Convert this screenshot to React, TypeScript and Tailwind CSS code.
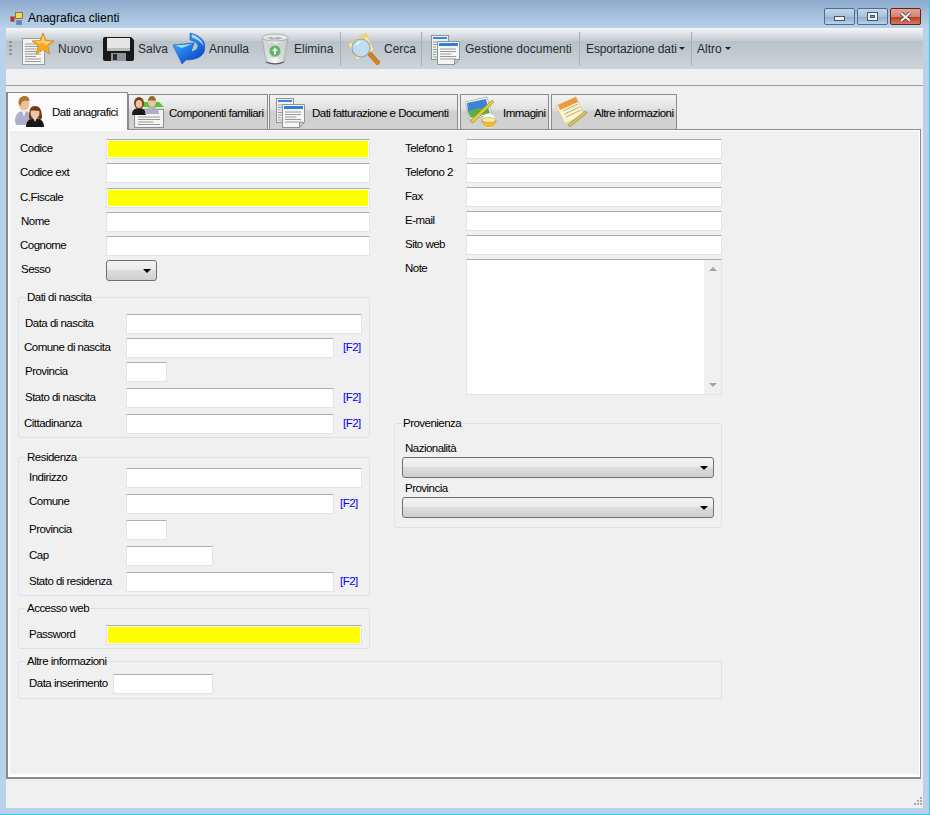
import React from 'react';

const FONT = "font-['Liberation_Sans',Arial,sans-serif]";

function DocLines({ x, y, w, n }: { x: number; y: number; w: number; n: number }) {
    return (
        <g stroke="#9a9a9a" strokeWidth="1">
            {Array.from({ length: n }).map((_, i) => (
                <line key={i} x1={x} x2={x + (i % 3 === 2 ? w * 0.7 : w)} y1={y + i * 2.5} y2={y + i * 2.5} />
            ))}
        </g>
    );
}

function NuovoIcon() {
    return (
        <svg width="32" height="32" viewBox="0 0 32 32" className="shrink-0">
            <rect x="0.5" y="5.5" width="22" height="26" fill="#f4f4f2" stroke="#9b9b9b" />
            <DocLines x={3} y={11} w={16} n={8} />
            <path d="M21 0l3 7.4 8 .6-6.100 5.100 2 7.900L21 16.800 14.100 21l2-7.900L10 8l8-.6z" fill="#f7a823" stroke="#c9811a" strokeWidth="0.7" />
            <path d="M21 2l2 6 6 .5-4.600 3.600L21 10l-5 .5L14 8.500l5.500-.5z" fill="#fbd266" />
        </svg>
    );
}

function SalvaIcon() {
    return (
        <svg width="32" height="32" viewBox="0 0 32 32" className="shrink-0">
            <path d="M2 4h26l3 3v19a2 2 0 0 1-2 2H2a2 2 0 0 1-2-2V6a2 2 0 0 1 2-2z" fill="#17191b" />
            <rect x="4" y="5" width="23" height="13" fill="#e6e6e6" />
            <rect x="4" y="15" width="23" height="3" fill="#bdbdbd" />
            <rect x="8" y="20" width="15" height="8" fill="#8f9296" />
            <rect x="10" y="21" width="4" height="6" fill="#2a2a2a" />
        </svg>
    );
}

function AnnullaIcon() {
    return (
        <svg width="32" height="33" viewBox="0 0 32 33" className="shrink-0">
            <defs>
                <linearGradient id="und" x1="0" y1="0" x2="0.8" y2="1">
                    <stop offset="0" stopColor="#62baf7" />
                    <stop offset="0.55" stopColor="#1f7ae6" />
                    <stop offset="1" stopColor="#0a3fc0" />
                </linearGradient>
            </defs>
            <path d="M17 1C26 3 32 8 32 15 32 24 24 28 13 28L9 32 0 13 21 11 18 20C22 19 25 17 25 14 25 11 21 9 17 8z" fill="url(#und)" stroke="#1757c4" strokeWidth="0.6" />
            <path d="M19 2.500C25 4 30 9 30.500 14 28 10 24 7 19 5.500z" fill="#a5dcfb" />
            <path d="M2 13.500L19 12 9 16z" fill="#a5dcfb" />
        </svg>
    );
}

function EliminaIcon() {
    return (
        <svg width="28" height="32" viewBox="0 0 28 32" className="shrink-0">
            <defs>
                <linearGradient id="bin" x1="0" y1="0" x2="1" y2="0">
                    <stop offset="0" stopColor="#c9cdcd" />
                    <stop offset="0.5" stopColor="#f6f7f7" />
                    <stop offset="1" stopColor="#bcc1c1" />
                </linearGradient>
            </defs>
            <path d="M1 5l4 24c5 2.500 13 2.500 18 0l4-24z" fill="url(#bin)" stroke="#9aa0a0" strokeWidth="0.6" />
            <path d="M5 8l3 3 3-2 4 2 4-2 4 2-1 4-3 2 2 4-2 4-4-1-4 1-3-3-1-5z" fill="#cfd3d3" />
            <ellipse cx="14" cy="4.500" rx="13" ry="3.500" fill="#e8eaea" stroke="#9aa0a0" strokeWidth="0.8" />
            <path d="M6 5l4-1 3 1 4-1 5 1-4 1.500h-8z" fill="#a9aeae" />
            <circle cx="14" cy="18" r="5.500" fill="#5fb668" />
            <path d="M14 14.500l3 3.500h-2v3.500h-2V18h-2z" fill="#e6f5e7" />
            <path d="M5 29c5 2.500 13 2.500 18 0" stroke="#5a5f5f" strokeWidth="1.200" fill="none" />
        </svg>
    );
}

function CercaIcon() {
    return (
        <svg width="32" height="32" viewBox="0 0 32 32" className="shrink-0">
            <path d="M0 11L18 0l8 17-17 10z" fill="#f4e8b0" stroke="#c9bd7e" strokeWidth="0.6" />
            <path d="M3 10l15-9 1 3-15 9z" fill="#f0d465" />
            <circle cx="13" cy="15" r="9" fill="#bfdcf0" stroke="#9aa4ad" strokeWidth="1.200" />
            <path d="M7 13c1-3 4-5 7-5-2 2-4 3-7 5z" fill="#f0f8fd" />
            <path d="M20 22l3-3 9 10c-1 2-2 3-3 3z" fill="#d9811d" stroke="#935510" strokeWidth="0.5" />
        </svg>
    );
}

function DocumentiIcon() {
    return (
        <svg width="30" height="32" viewBox="0 0 30 32" className="shrink-0">
            <rect x="0.500" y="2.500" width="17" height="24" fill="#eceff1" stroke="#8f969b" />
            <rect x="2" y="4" width="14" height="2" fill="#3c87d8" />
            <DocLines x={2} y={9} w={4} n={7} />
            <path d="M6.500 8.500h22v18l-5 5h-17z" fill="#f5f5f5" stroke="#8f969b" />
            <rect x="8" y="10" width="19" height="3" fill="#2f7ed8" />
            <DocLines x={9} y={16} w={16} n={5} />
            <path d="M23.500 31.500v-5h5z" fill="#c9cdd0" stroke="#8f969b" />
        </svg>
    );
}

function PersoneIcon() {
    return (
        <svg width="32" height="32" viewBox="0 0 32 32" className="shrink-0">
            <path d="M1 25c0-7 4-10 9-10s8 3 8 9l-5 5H2z" fill="#aab0cc" />
            <path d="M8 15l2 6 2-6z" fill="#eef0f5" />
            <ellipse cx="10" cy="8" rx="5.500" ry="6.500" fill="#eec199" />
            <path d="M4.500 7c0-5 3-7 6-7s5 2 5 5c-3 0-7-1-8 2l-1 3z" fill="#a9772f" />
            <path d="M12 31c0-6 4-9 9-9s9 3 9 9z" fill="#17171a" />
            <path d="M19 22l2 4 2-4z" fill="#f0d2b5" />
            <path d="M15 22c0-8 1-12 6-12s7 4 7 12c-1 2-3 2-3 0H18c0 2-2 2-3 0z" fill="#6d3a14" />
            <ellipse cx="21" cy="17" rx="4.500" ry="5.500" fill="#f0c7a0" />
            <path d="M16.500 15c1-3 3-4 5-4s3.500 1 4 4c-3 0-6-1-9 0z" fill="#6d3a14" />
        </svg>
    );
}

function FamigliaIcon() {
    return (
        <svg width="32" height="32" viewBox="0 0 32 32" className="shrink-0">
            <path d="M3 11l4-5h20l5 5z" fill="#5cc13a" />
            <rect x="2.500" y="13.500" width="29" height="18" fill="#f5f5f0" stroke="#8e8e8e" />
            <DocLines x={6} y={21} w={22} n={4} />
            <path d="M0 19c0-5 3-7 7-7s7 2 7 7z" fill="#1a1a1a" />
            <ellipse cx="7" cy="7" rx="5" ry="6" fill="#7a3f14" />
            <ellipse cx="7" cy="8" rx="3.200" ry="4" fill="#efc59d" />
            <path d="M13 18c0-5 3-7 7-7s7 2 7 7z" fill="#a9b2c2" />
            <ellipse cx="20" cy="6" rx="4" ry="5" fill="#efc59d" />
            <path d="M16 5c0-3 2-5 4-5s4 2 4 5c-3-1-6-1-8 0z" fill="#8a6a2f" />
        </svg>
    );
}

function ImmaginiIcon() {
    return (
        <svg width="32" height="32" viewBox="0 0 32 32" className="shrink-0">
            <path d="M0 6l22-5 5 17-22 6z" fill="#f2f2f2" stroke="#9a9a9a" strokeWidth="0.6" />
            <path d="M2 7l19-4 2 8-20 5z" fill="#3d83d6" />
            <path d="M3 16c6-4 12-4 20-5l2 6-19 5z" fill="#57b04a" />
            <path d="M5 25L27 4l2 2L8 27z" fill="#e8c93c" stroke="#8f7d1e" strokeWidth="0.5" />
            <circle cx="24" cy="25" r="7" fill="#fff" />
            <path d="M17 24h14c0 4-3 7-7 7s-7-3-7-7z" fill="#f2bd2b" stroke="#a47a10" strokeWidth="0.5" />
            <ellipse cx="24" cy="24" rx="7" ry="2.500" fill="#fbe9a6" stroke="#b58b1e" strokeWidth="0.5" />
        </svg>
    );
}

function AltreIcon() {
    return (
        <svg width="32" height="32" viewBox="0 0 32 32" className="shrink-0">
            <path d="M0 10L20 1l8 17L9 28z" fill="#fbf3c9" stroke="#c9bd7e" strokeWidth="0.6" />
            <path d="M2 9l18-8 2 5-18 8z" fill="#ec9a3a" />
            <g stroke="#b4ad8c" strokeWidth="1">
                <line x1="7" y1="15" x2="22" y2="8" />
                <line x1="8.500" y1="18" x2="23.500" y2="11" />
                <line x1="10" y1="21" x2="25" y2="14" />
            </g>
            <path d="M12 29L29 15l2 2-17 14z" fill="#d8c060" stroke="#8f7d1e" strokeWidth="0.5" />
        </svg>
    );
}

function TitleIcon() {
    return (
        <svg width="13" height="13" viewBox="0 0 13 13" className="shrink-0">
            <rect x="0.500" y="4.500" width="4" height="5" fill="#d81e1e" stroke="#8b8b8b" />
            <rect x="5.500" y="0.500" width="7" height="6" fill="#f3d65c" stroke="#8a7a30" />
            <rect x="6.500" y="8.500" width="5" height="4" fill="#4c84d8" stroke="#7d8ea8" />
        </svg>
    );
}

function Arrow({ className = '' }: { className?: string }) {
    return <span className={`w-0 h-0 border-x-[3px] border-x-transparent border-t-[3px] border-t-[#222] ${className}`} />;
}

function ToolSep({ className = '' }: { className?: string }) {
    return <div className={`w-px h-[34px] bg-[#a8b0b5] ${className}`} />;
}

function Text({ value, className = '' }: { value: string; className?: string }) {
    return <input readOnly value={value} className={`block h-5 shrink-0 bg-white outline-none border border-[#dfe3ea] border-t-[#abadb3] rounded-[1px] ${className}`} />;
}

function Required({ className = '' }: { className?: string }) {
    return <div className={`h-5 shrink-0 bg-[#ffff00] border border-[#dfe3ea] border-t-[#abadb3] shadow-[inset_0_0_0_1px_#fff] rounded-[1px] ${className}`} />;
}

function Combo({ className = '' }: { className?: string }) {
    return (
        <div className={`h-[21px] shrink-0 flex items-center justify-end pr-[5px] border border-[#707070] rounded-[3px] bg-[linear-gradient(#f2f2f2_0%,#ebebeb_45%,#dddddd_50%,#cfcfcf_100%)] ${className}`}>
            <span className="w-0 h-0 border-x-[4px] border-x-transparent border-t-[4px] border-t-black" />
        </div>
    );
}

function F2({ className = '' }: { className?: string }) {
    return <span className={`text-[#0000ff] ${className}`}>[F2]</span>;
}

function Group({ title, className = '', children }: { title: string; className?: string; children: React.ReactNode }) {
    return (
        <fieldset className={`border border-[#d9e2ea] rounded-[3px] ${className}`}>
            <legend className="ml-[7px] px-px leading-[14px] whitespace-nowrap">{title}</legend>
            {children}
        </fieldset>
    );
}

const tabs = [
    { label: 'Componenti familiari', icon: <FamigliaIcon />, cls: 'w-[140px] pl-[3px] gap-[5px] mr-px' },
    { label: 'Dati fatturazione e Documenti', icon: <DocumentiIcon />, cls: 'w-[189px] pl-[6px] gap-[6px] mr-[2px]' },
    { label: 'Immagini', icon: <ImmaginiIcon />, cls: 'w-[89px] pl-[4px] gap-[6px] mr-[2px]' },
    { label: 'Altre informazioni', icon: <AltreIcon />, cls: 'w-[126px] pl-[4px] gap-[6px]' },
];

export default function App() {
    return (
        <div className={`${FONT} w-[930px] h-[815px] flex flex-col overflow-hidden text-[11.5px] tracking-[-0.52px] text-black bg-[#b9d1ea] border-r border-b border-[#2fd0e6]`}>
            {/* barra del titolo */}
            <div className="h-7 shrink-0 flex items-start bg-[linear-gradient(#8fabcc,#b9d2ea)] pl-[10px] pr-2">
                <div className="flex items-center gap-[5px] mt-[9px]">
                    <TitleIcon />
                    <span className="text-[12px] tracking-normal">Anagrafica clienti</span>
                </div>
                <div className="ml-auto mt-2 flex gap-[2px]">
                    <div className="w-[31px] h-[17px] flex items-center justify-center rounded-[2px] border border-[#4d6c91] bg-[linear-gradient(#c3d6ea_0%,#a7c2dc_50%,#8eacc9_52%,#b9d2e8_100%)]">
                        <div className="w-[11px] h-[5px] mt-[4px] bg-[#eef2f6] border border-[#44566c]" />
                    </div>
                    <div className="w-[31px] h-[17px] flex items-center justify-center rounded-[2px] border border-[#4d6c91] bg-[linear-gradient(#c3d6ea_0%,#a7c2dc_50%,#8eacc9_52%,#b9d2e8_100%)]">
                        <div className="w-[11px] h-[9px] flex items-center justify-center bg-[#eef2f6] border border-[#44566c]">
                            <div className="w-[5px] h-[3px] bg-[#8098b4] border border-[#44566c]" />
                        </div>
                    </div>
                    <div className="w-[31px] h-[17px] flex items-center justify-center rounded-[2px] border border-[#6b1f1a] bg-[linear-gradient(#e3a398_0%,#d48473_50%,#b83a22_52%,#d87a62_100%)]">
                        <svg width="11" height="10" viewBox="0 0 11 10">
                            <path d="M1 1l9 8M10 1l-9 8" stroke="#4a3a3a" strokeWidth="3.400" />
                            <path d="M1 1l9 8M10 1l-9 8" stroke="#f4f0ee" strokeWidth="2" />
                        </svg>
                    </div>
                </div>
            </div>

            <div className="flex-1 flex flex-col mx-[6px] min-h-0 bg-[#f0f0f0]">
                {/* toolbar */}
                <div className="h-[41px] shrink-0 flex items-center rounded-tl-[2px] bg-[linear-gradient(#f5f6f7_0%,#c5ccd2_31%,#b8c2c9_33%,#cdd4d9_100%)] text-[#2a2a2a] text-[12px] tracking-normal">
                    <div className="ml-[3px] w-[3px] h-[15px] bg-[repeating-linear-gradient(#8d969c_0_2px,transparent_2px_4px)]" />
                    <div className="ml-[10px] flex items-center gap-1"><NuovoIcon /><span className="w-[36px]">Nuovo</span></div>
                    <div className="ml-[9px] flex items-center gap-[3px]"><SalvaIcon /><span className="w-[27px]">Salva</span></div>
                    <div className="ml-[8px] flex items-center gap-1"><AnnullaIcon /><span className="w-[41px]">Annulla</span></div>
                    <div className="ml-[11px] flex items-center gap-[5px]"><EliminaIcon /><span className="w-[39px]">Elimina</span></div>
                    <ToolSep className="ml-[7px]" />
                    <div className="ml-[7px] flex items-center gap-1"><CercaIcon /><span className="w-[30px]">Cerca</span></div>
                    <ToolSep className="ml-[7px]" />
                    <div className="ml-[9px] flex items-center gap-1"><DocumentiIcon /><span className="w-[107px] whitespace-nowrap">Gestione documenti</span></div>
                    <ToolSep className="ml-[7px]" />
                    <div className="ml-[6px] flex items-center"><span className="w-[91px] whitespace-nowrap tracking-[-0.12px]">Esportazione dati</span><Arrow className="ml-[2px]" /></div>
                    <ToolSep className="ml-[6px]" />
                    <div className="ml-[5px] flex items-center"><span className="w-[27px]">Altro</span><Arrow className="ml-[1px]" /></div>
                </div>

                {/* barra vuota */}
                <div className="h-[16px] shrink-0" />
                <div className="h-px shrink-0 bg-[#a0a0a0]" />

                {/* linguette */}
                <div className="h-[43px] shrink-0 flex items-end pt-[6px]">
                    <div className="relative z-10 w-[122px] h-[38px] -mb-px flex items-center pl-[6px] gap-[6px] bg-[#fbfbfb] border-2 border-b-0 border-[#8a8a90] border-r border-t rounded-t-[1px]">
                        <PersoneIcon />
                        <span className="whitespace-nowrap pt-[3px]">Dati anagrafici</span>
                    </div>
                    {tabs.map((tab, index) => (
                        <div key={index} className={`h-[35px] flex items-center border border-b-0 border-[#8a8a90] bg-[linear-gradient(#f3f3f3_0%,#e2e2e2_40%,#cfcfcf_50%,#d2d2d2_100%)] whitespace-nowrap ${tab.cls}`}>
                            {tab.icon}
                            <span className="pt-[3px]">{tab.label}</span>
                        </div>
                    ))}
                </div>

                {/* pagina */}
                <div className="h-[650px] shrink-0 w-[915px] border border-[#8a8a90] border-l-2 border-b-2 bg-[#f0f0f0] shadow-[inset_2px_1px_0_#fff,inset_-1px_-3px_0_#fff] pt-[9px] pl-[10px]">
                    <div className="flex">
                        {/* colonna sinistra */}
                        <div className="w-[352px] shrink-0">
                            <div className="flex items-center h-5 pl-[2px]"><span className="w-[86px] -mt-px">Codice</span><Required className="w-[264px]" /></div>
                            <div className="flex items-center h-5 pl-[2px] mt-1"><span className="w-[86px] -mt-px">Codice ext</span><Text value="" className="w-[264px]" /></div>
                            <div className="flex items-center h-5 pl-[2px] mt-[5px]"><span className="w-[86px] -mt-px">C.Fiscale</span><Required className="w-[264px]" /></div>
                            <div className="flex items-center h-5 pl-[3px] mt-[4px]"><span className="w-[85px] -mt-px">Nome</span><Text value="" className="w-[264px]" /></div>
                            <div className="flex items-center h-5 pl-[2px] mt-[4px]"><span className="w-[86px] -mt-px">Cognome</span><Text value="" className="w-[264px]" /></div>
                            <div className="flex items-center h-[21px] pl-[3px] mt-[4px]"><span className="w-[85px] -mt-[2px]">Sesso</span><Combo className="w-[51px]" /></div>

                            <Group title="Dati di nascita" className="mt-[9px] h-[148px]">
                                <div className="flex items-center h-5 mt-[10px] pl-[6px]"><span className="w-[101px] -mt-px">Data di nascita</span><Text value="" className="w-[236px]" /></div>
                                <div className="flex items-center h-5 mt-[4px] pl-[5px]"><span className="w-[102px] -mt-px">Comune di nascita</span><Text value="" className="w-[208px]" /><F2 className="ml-[9px]" /></div>
                                <div className="flex items-center h-5 mt-[4px] pl-[6px]"><span className="w-[101px] -mt-px">Provincia</span><Text value="" className="w-[41px]" /></div>
                                <div className="flex items-center h-5 mt-[6px] pl-[6px]"><span className="w-[101px] -mt-px">Stato di nascita</span><Text value="" className="w-[208px]" /><F2 className="ml-[9px]" /></div>
                                <div className="flex items-center h-5 mt-[6px] pl-[5px]"><span className="w-[102px] -mt-px">Cittadinanza</span><Text value="" className="w-[208px]" /><F2 className="ml-[9px]" /></div>
                            </Group>

                            <Group title="Residenza" className="mt-[12px] h-[146px]">
                                <div className="flex items-center h-5 mt-[4px] pl-[10px]"><span className="w-[97px] -mt-px">Indirizzo</span><Text value="" className="w-[236px]" /></div>
                                <div className="flex items-center h-5 mt-[6px] pl-[10px]"><span className="w-[97px] -mt-[4px]">Comune</span><Text value="" className="w-[208px]" /><F2 className="ml-[6px]" /></div>
                                <div className="flex items-center h-5 mt-[6px] pl-[10px]"><span className="w-[97px]">Provincia</span><Text value="" className="w-[41px]" /></div>
                                <div className="flex items-center h-5 mt-[6px] pl-[10px]"><span className="w-[97px]">Cap</span><Text value="" className="w-[87px]" /></div>
                                <div className="flex items-center h-5 mt-[6px] pl-[10px]"><span className="w-[97px]">Stato di residenza</span><Text value="" className="w-[208px]" /><F2 className="ml-[6px]" /></div>
                            </Group>

                            <Group title="Accesso web" className="mt-[5px] h-[48px]">
                                <div className="flex items-center h-5 mt-[10px] pl-[10px]"><span className="w-[77px]">Password</span><Required className="w-[256px]" /></div>
                            </Group>
                        </div>

                        {/* colonna destra */}
                        <div className="w-[328px] shrink-0 ml-[24px]">
                            {['Telefono 1', 'Telefono 2', 'Fax', 'E-mail', 'Sito web'].map((label, index) => (
                                <div key={index} className="flex items-center h-5 mb-1 pl-[11px]"><span className="w-[61px] -mt-px">{label}</span><Text value="" className="w-[256px]" /></div>
                            ))}
                            <div className="flex pl-[11px]">
                                <span className="w-[61px] pt-px">Note</span>
                                <div className="w-[256px] h-[136px] flex justify-end bg-white border border-[#dfe3ea] border-t-[#abadb3]">
                                    <div className="w-[17px] flex flex-col items-center justify-between py-[7px] bg-[#f0f0f0]">
                                        <span className="w-0 h-0 border-x-[4px] border-x-transparent border-b-[4px] border-b-[#a3a3a3]" />
                                        <span className="w-0 h-0 border-x-[4px] border-x-transparent border-t-[4px] border-t-[#a3a3a3]" />
                                    </div>
                                </div>
                            </div>
                            <Group title="Provenienza" className="mt-[21px] h-[112px]">
                                <div className="pl-[10px] mt-[11px] h-[14px] leading-[14px]">Nazionalità</div>
                                <Combo className="ml-[7px] mt-[2px] w-[312px]" />
                                <div className="pl-[10px] mt-[3px] h-[14px] leading-[14px]">Provincia</div>
                                <Combo className="ml-[7px] mt-[2px] w-[312px]" />
                            </Group>
                        </div>
                    </div>

                    <Group title="Altre informazioni" className="w-[704px] h-[45px] mt-[5px]">
                        <div className="flex items-center h-5 mt-[6px] pl-[10px]"><span className="w-[84px] whitespace-nowrap">Data inserimento</span><Text value="" className="w-[100px]" /></div>
                    </Group>
                </div>

                {/* barra di stato */}
                <div className="flex-1 flex items-end justify-end pr-px pb-[2px]">
                    <svg width="9" height="9" viewBox="0 0 9 9" fill="#a8a8a8">
                        <rect x="7" y="0" width="2" height="2" /><rect x="4" y="3" width="2" height="2" /><rect x="7" y="3" width="2" height="2" />
                        <rect x="1" y="6" width="2" height="2" /><rect x="4" y="6" width="2" height="2" /><rect x="7" y="6" width="2" height="2" />
                    </svg>
                </div>
            </div>
            <div className="h-[6px] shrink-0" />
        </div>
    );
}
